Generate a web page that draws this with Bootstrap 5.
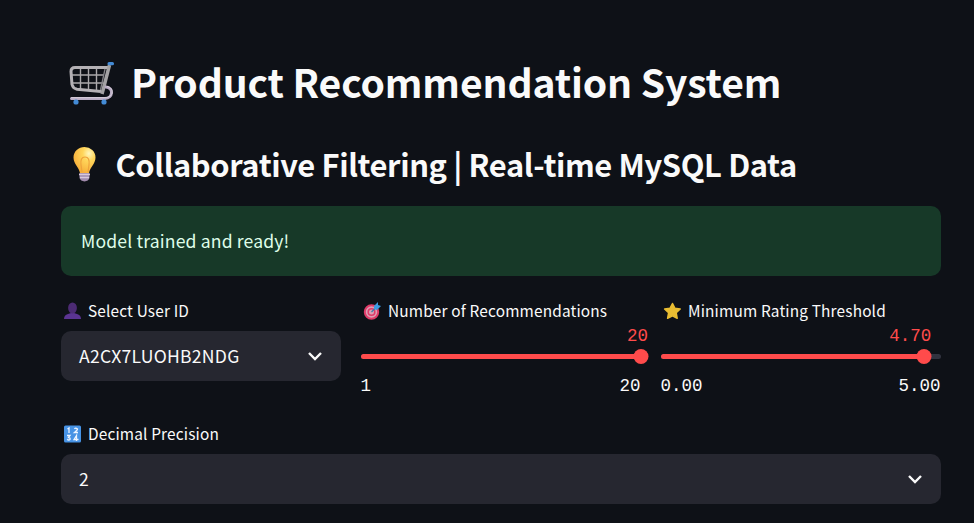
<!DOCTYPE html>
<html lang="en">
<head>
<meta charset="utf-8">
<meta name="viewport" content="width=device-width, initial-scale=1">
<title>Product Recommendation System</title>
<link rel="stylesheet" href="https://cdn.jsdelivr.net/npm/bootstrap@5.3.0/dist/css/bootstrap.min.css">
<style>
body{background:#0e1117;color:#fafafa;font-family:"Noto Sans CJK SC","Noto Sans",sans-serif;font-size:17.6px;overflow:hidden}
.page{padding:53px 33px 0 61px}
.app-title{font-size:39.1px;font-weight:700;line-height:60px;height:60px;margin:0;white-space:nowrap;letter-spacing:-.13px}
.app-sub{font-size:30.9px;font-weight:700;line-height:46px;height:46px;margin:30px 0 17px;white-space:nowrap;letter-spacing:-.4px}
.app-title span,.app-sub span{padding-bottom:4px}
.app-title svg{margin:0 15px 0 8px}
.app-sub svg{margin:-4px 16.5px 0 11px}
.ready{background:#173928;color:#dffde9;height:70px;border-radius:10px;padding:0 20px;margin-bottom:20px;letter-spacing:.15px}
.controls{display:grid;grid-template-columns:repeat(3,280px);gap:20px;height:123px}
.field-label{height:30px;font-size:15.4px;line-height:28px;padding-left:2px;white-space:nowrap;letter-spacing:.16px}
.field-label span{padding-bottom:2px}
.field-label svg{margin-right:6px}
.picker{background:#262730;height:50px;border:0;border-radius:10px;color:#fafafa;padding:0 18px;margin-top:5px;width:100%;letter-spacing:.23px}
.mono{font-family:"Liberation Mono",monospace;font-size:17.5px;line-height:20px}
.limits{margin-left:-.5px;margin-right:.5px}
.reading{color:#ff4b4b;height:20px;position:relative}
.reading span{position:absolute;transform:translateX(-50%)}
.rail{height:5px;margin:8px 0 17px;border-radius:3px;background:#31333f;position:relative}
.rail-fill{height:5px;border-radius:3px;background:#ff4b4b}
.knob{position:absolute;width:15px;height:15px;border-radius:50%;background:#ff4b4b;top:-5px;transform:translateX(-50%)}
</style>
</head>
<body>
<main class="page">
<h1 class="app-title d-flex align-items-center">
<svg width="47" height="46" viewBox="0 0 47 46" fill="none"><g stroke="#aaa8ab" stroke-width="1.4"><path d="M3 15h32M4 23h30M11.500 7v22M19.500 7v23M27.500 7v23"/></g><path d="M39 7.500H6q-4 0-4 4l1 13q1 4 5 4.700l24 2.300" stroke="#b4b1b5" stroke-width="3"/><path d="M40.500 5l-7.500 29" stroke="#a3a2a4" stroke-width="3.500"/><path d="M36 9l-4.500 21" stroke="#858489" stroke-width="1.300"/><path d="M37 27c8 .5 7 11.500-1 11.500H2.500" stroke="#b9acc4" stroke-width="3" stroke-linecap="round"/><path d="M38 26.500c8 1.500 6.500 11-2 11.200H2" stroke="#ddd8df" stroke-width=".8"/><rect x="38.500" y="2" width="6.500" height="3.300" rx="1.500" fill="#438bd6"/><circle cx="7" cy="42" r="2.600" fill="#438bd6"/><circle cx="35" cy="42" r="2.600" fill="#438bd6"/></svg>
<span>Product Recommendation System</span></h1>
<h2 class="app-sub d-flex align-items-center">
<svg width="27" height="36" viewBox="0 0 27 36"><defs><radialGradient id="bulb" cx=".7" cy=".25" r=".8"><stop stop-color="#fff7be"/><stop offset=".35" stop-color="#ffd65b"/><stop offset="1" stop-color="#f7ad38"/></radialGradient></defs><path d="M8 27C7 21 1.500 18 1.500 11.500a11 10.500 0 0 1 22 0C23.500 18 18 21 17 27z" fill="url(#bulb)"/><path d="M10 26l-1-7q-1-8 4-8t4 8l-1 7" fill="none" stroke="#eea33c" stroke-width="1.200"/><path d="M7.500 27h10v5q-1 3-5 3.500-4-.5-5-3.500z" fill="#a18bad"/><path d="M7 28.500h11M8 31.500h9" stroke="#d8c8dd" stroke-width="1.300"/></svg>
<span>Collaborative Filtering | Real-time MySQL Data</span></h2>
<div class="ready d-flex align-items-center"><span>Model trained and ready!</span></div>
<section class="controls">
<div>
<div class="field-label d-flex align-items-center"><svg width="19" height="18" viewBox="0 0 19 18"><path d="M1 17q0-4 4-5l3-1v-2h3v2l3 1q4 1 4 5z" fill="#5b3492"/><ellipse cx="9.500" cy="6" rx="4.400" ry="5.500" fill="#4c2b74"/></svg><span>Select User ID</span></div>
<button type="button" class="picker d-flex align-items-center justify-content-between"><span>A2CX7LUOHB2NDG</span><svg width="16" height="10" viewBox="0 0 16 10" fill="none" stroke="#fafafa" stroke-width="2.400"><path d="M2 2l6 6 6-6"/></svg></button>
</div>
<div>
<div class="field-label d-flex align-items-center"><svg width="19" height="18" viewBox="0 0 19 18" fill="none"><circle cx="8.500" cy="10" r="6.700" fill="#dc9fb4" stroke="#df3b69" stroke-width="2"/><circle cx="8.500" cy="10" r="3.300" stroke="#df3b69" stroke-width="1.600"/><path d="M8.500 10l6-6" stroke="#397baa" stroke-width="1.300"/><path d="M11 7V4l4-4v3l3 1-4 4z" fill="#3c9be2"/></svg><span>Number of Recommendations</span></div>
<div class="reading mono"><span style="left:98.800%">20</span></div>
<div class="rail"><div class="rail-fill" style="width:100%"></div><div class="knob" style="left:100%"></div></div>
<div class="limits mono d-flex justify-content-between"><span>1</span><span>20</span></div>
</div>
<div>
<div class="field-label d-flex align-items-center"><svg width="19" height="18" viewBox="0 0 19 18"><path d="M9.500 1.500l2.300 4.700 5.400.8-4 3.800 1 5.500-4.700-2.500-4.900 2.500 1-5.500-4-3.800 5.500-.8z" fill="#e9bd32" stroke="#e9bd32" stroke-width="1.500" stroke-linejoin="round"/></svg><span>Minimum Rating Threshold</span></div>
<div class="reading mono"><span style="left:89%">4.70</span></div>
<div class="rail"><div class="rail-fill" style="width:94%"></div><div class="knob" style="left:94%"></div></div>
<div class="limits mono d-flex justify-content-between"><span>0.00</span><span>5.00</span></div>
</div>
</section>
<div>
<div class="field-label d-flex align-items-center"><svg width="19" height="18" viewBox="0 0 19 18"><rect x="1" y=".5" width="17" height="17" rx="1.500" fill="#4793e5"/><g fill="none" stroke="#eef5ff" stroke-width="1.300"><path d="M4.500 4l1.500-1v5M11.500 4q1-1.600 3 0 0 1-3 3.500h3.500M4 10.500h3l-1.500 2q2 0 1.500 2-1 1-3 0M13.500 16v-5.500l-2.500 4h4.500"/></g></svg><span>Decimal Precision</span></div>
<button type="button" class="picker d-flex align-items-center justify-content-between"><span>2</span><svg width="16" height="10" viewBox="0 0 16 10" fill="none" stroke="#fafafa" stroke-width="2.400"><path d="M2 2l6 6 6-6"/></svg></button>
</div>
</main>
<script src="https://cdn.jsdelivr.net/npm/bootstrap@5.3.0/dist/js/bootstrap.bundle.min.js"></script>
</body>
</html>
